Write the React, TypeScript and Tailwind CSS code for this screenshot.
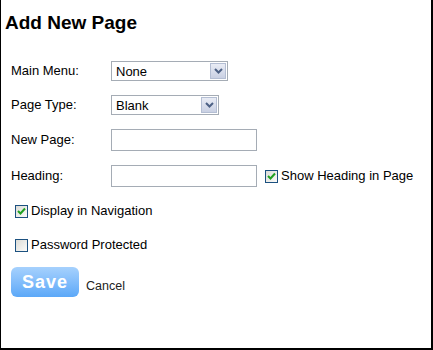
const FONT = { fontFamily: '"Liberation Sans", Arial, sans-serif' };

function FakeSelect({ value, width }: { value: string; width: string }) {
  return (
    <div
      className={`${width} h-[20px] flex items-center justify-between border border-[#a5acb5] bg-white pl-[4px] pr-[1px]`}
    >
      <span className="text-[13px] text-black leading-none">{value}</span>
      <span className="w-[16px] h-[16px] flex items-center justify-center border border-[#b4bed3] bg-gradient-to-b from-[#e9ecf5] to-[#c9d0e3]">
        <svg width="9" height="6" viewBox="0 0 9 6">
          <path d="M1 1 L4.5 4.5 L8 1" fill="none" stroke="#4d6185" strokeWidth="2" />
        </svg>
      </span>
    </div>
  );
}

function Check({ checked }: { checked: boolean }) {
  return (
    <span className="w-[13px] h-[13px] shrink-0 flex items-center justify-center border border-[#1c5180] bg-gradient-to-br from-[#dcdcd7] to-[#fbfbf9]">
      {checked && (
        <svg width="9" height="8" viewBox="0 0 9 8">
          <path d="M1 4 L3.5 6.5 L8 1.5" fill="none" stroke="#21a121" strokeWidth="2" />
        </svg>
      )}
    </span>
  );
}

function TextBox() {
  return <div className="w-[146px] h-[22px] border border-[#a5acb5] bg-white" />;
}

export default function App() {
  return (
    <div
      className="w-[433px] h-[350px] pt-[12px] bg-white border-l border-r-2 border-b-2 border-black text-black"
      style={FONT}
    >
      <h1 className="h-[22px] pl-[4px] text-[19px] leading-[22px] font-bold">Add New Page</h1>

      <div className="mt-[20px] flex flex-col text-[13px]">
        <div className="h-[34px] flex items-center">
          <span className="w-[110px] pl-[10px]">Main Menu:</span>
          <FakeSelect value="None" width="w-[117px]" />
        </div>
        <div className="h-[34px] flex items-center">
          <span className="w-[110px] pl-[10px]">Page Type:</span>
          <FakeSelect value="Blank" width="w-[108px]" />
        </div>
        <div className="h-[36px] flex items-center">
          <span className="w-[110px] pl-[10px]">New Page:</span>
          <TextBox />
        </div>
        <div className="h-[36px] flex items-center">
          <span className="w-[110px] pl-[10px]">Heading:</span>
          <TextBox />
          <span className="ml-[8px] flex items-center gap-[3px]">
            <Check checked />
            <span>Show Heading in Page</span>
          </span>
        </div>
        <div className="h-[34px] flex items-center pl-[14px] gap-[3px]">
          <Check checked />
          <span>Display in Navigation</span>
        </div>
        <div className="h-[34px] flex items-center pl-[14px] gap-[3px]">
          <Check checked={false} />
          <span>Password Protected</span>
        </div>
      </div>

      <div className="mt-[5px] pl-[10px] flex items-end gap-[7px]">
        <button className="w-[68px] h-[30px] rounded-[6px] bg-gradient-to-b from-[#a6d1fd] to-[#5ba8f8] text-white text-[18px] font-bold tracking-[1px]">
          Save
        </button>
        <span className="text-[12.5px] text-[#222] mb-[1px]">Cancel</span>
      </div>
    </div>
  );
}
